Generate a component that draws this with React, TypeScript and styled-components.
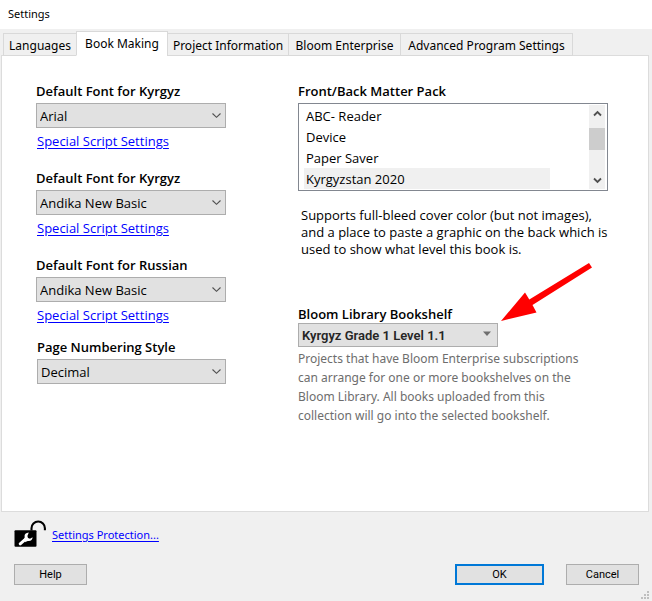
import React, { useState } from "react";
import styled, { createGlobalStyle } from "styled-components";

const GlobalStyle = createGlobalStyle`
  *, *::before, *::after { box-sizing: border-box; }
  body { margin: 0; background: #f0f0f0; color: #000; font: 13px/17px "Open Sans", "Noto Sans", sans-serif; }
  button, select { font: inherit; color: inherit; margin: 0; border-radius: 0; }
  p, h1, ul { margin: 0; padding: 0; font: inherit; }
`;

const Dialog = styled.main`
  display: flex;
  flex-direction: column;
  min-height: 100vh;
`;

const TitleBar = styled.header`
  height: 29px;
  padding-left: 8px;
  background: #fff;
  font: 11px/28px "Noto Sans", sans-serif;
`;

const TabList = styled.div`
  display: flex;
  align-items: flex-end;
  height: 27px;
  padding: 0 3px;
  margin-bottom: -1px;
`;

const Tab = styled.button<{ $active: boolean; $width: number }>`
  position: relative;
  flex: 0 1 ${(p) => p.$width}px;
  height: ${(p) => (p.$active ? 25 : 23)}px;
  margin-right: -1px;
  padding: ${(p) => (p.$active ? 0 : 2)}px 0 0;
  border: 1px solid #d9d9d9;
  border-bottom-color: ${(p) => (p.$active ? "#fff" : "#d9d9d9")};
  background: ${(p) => (p.$active ? "#fff" : "#f0f0f0")};
  font: 12px/19px "Noto Sans", sans-serif;
  white-space: nowrap;
  text-align: center;
`;

const Panel = styled.section`
  flex: 1;
  display: grid;
  grid-template-columns: 19fr 31fr;
  align-items: start;
  gap: 72px;
  margin: 0 3px 0 1px;
  padding: 26px 40px 84px 34px;
  border: 1px solid #dcdcdc;
  background: #fff;
`;

const Column = styled.div`
  display: flex;
  flex-direction: column;
`;

const FontGroup = styled.div`
  display: flex;
  flex-direction: column;
  align-items: stretch;
  height: 87px;
`;

const NumberingGroup = styled.div`
  display: flex;
  flex-direction: column;
  padding: 0 0 0 1px;
  margin-top: -5px;
`;

const Label = styled.label`
  height: 21px;
  line-height: 19px;
  font-weight: 600;
`;

const SelectFrame = styled.div<{ $compact?: boolean }>`
  display: grid;
  align-items: center;
  height: ${(p) => (p.$compact ? 24 : 25)}px;
  width: ${(p) => (p.$compact ? "200px" : "auto")};
  font: ${(p) => (p.$compact ? '600 13px/17px Roboto, sans-serif' : "inherit")};
  color: ${(p) => (p.$compact ? "#262626" : "#000")};

  & > * { grid-area: 1 / 1; }
  & > select { padding-top: ${(p) => (p.$compact ? 0 : 2)}px; }
  & > svg {
    justify-self: end;
    margin-right: ${(p) => (p.$compact ? 6 : 4)}px;
    pointer-events: none;
  }
`;

const Select = styled.select`
  appearance: none;
  width: 100%;
  height: 100%;
  padding: 0 20px 0 3px;
  border: 1px solid #adadad;
  background: #e1e1e1;
`;

const Link = styled.a<{ $small?: boolean }>`
  color: #0000ff;
  text-decoration: underline;
  text-underline-offset: 2px;
  font: ${(p) => (p.$small ? '11px/17px "Noto Sans", sans-serif' : "inherit")};
`;

const LinkLine = styled.p`
  padding: 5px 0 0 1px;
`;

const ListFrame = styled.div`
  display: flex;
  height: 88px;
  padding: 1px 2px 1px 5px;
  border: 1px solid #828790;
`;

const Options = styled.div`
  flex: 1;
  display: flex;
  flex-direction: column;
  padding-right: 39px;
  padding-top: 0;
`;

const Option = styled.button<{ $selected: boolean }>`
  flex: 0 0 21px;
  padding: 1px 2px 0;
  border: 0;
  text-align: left;
  background: ${(p) => (p.$selected ? "#f0f0f0" : "#fff")};
`;

const ScrollTrack = styled.div`
  display: flex;
  flex-direction: column;
  width: 16px;
  background: #f0f0f0;
`;

const ScrollButton = styled.button`
  display: grid;
  place-items: center;
  height: 17px;
  padding: 0;
  border: 0;
  background: transparent;

  &:last-child { margin-top: auto; }
`;

const ScrollThumb = styled.div`
  height: 22px;
  margin-top: 6px;
  background: #cdcdcd;
`;

const PackDescription = styled.p`
  padding: 16px 0 0 3px;
  margin-right: -4px;
`;

const Bookshelf = styled.div`
  position: relative;
  display: flex;
  flex-direction: column;
  margin-top: 48px;
`;

const BookshelfLabel = styled(Label)`
  height: 17px;
  line-height: 17px;
`;

const Arrow = styled.svg`
  position: absolute;
  left: 203px;
  top: -43px;
  pointer-events: none;
`;

const Hint = styled.p`
  max-width: 300px;
  padding-top: 2px;
  color: #6d6d6d;
  font: 12px/19px "Noto Sans", sans-serif;
`;

const Footer = styled.footer`
  display: flex;
  flex-direction: column;
  gap: 16px;
  padding: 8px 0 1px 14px;
`;

const Protection = styled.div`
  display: flex;
  align-items: center;
  gap: 6px;
  height: 28px;
`;

const Buttons = styled.div`
  display: flex;
  height: 36px;
  align-items: flex-start;
`;

const Button = styled.button<{ $primary?: boolean }>`
  width: ${(p) => (p.$primary ? 89 : 73)}px;
  height: 21px;
  margin-left: ${(p) => (p.$primary ? "auto" : "0")};
  margin-right: ${(p) => (p.$primary ? 22 : 0)}px;
  padding: 0;
  border: ${(p) => (p.$primary ? "2px solid #0078d7" : "1px solid #adadad")};
  background: #e1e1e1;
  font: 11px/17px Roboto, sans-serif;
`;

const Grip = styled.svg`
  align-self: flex-end;
  margin: 0 2px 0 2px;
`;

const Chevron = () => (
  <svg width="11" height="7" viewBox="0 0 11 7" fill="none" stroke="#505050" strokeWidth="1.1" aria-hidden="true">
    <path d="M1.5 1.5 5.5 5.3 9.5 1.5" />
  </svg>
);

const Caret = () => (
  <svg width="10" height="8" viewBox="0 0 10 8" fill="#6e6e6e" aria-hidden="true">
    <path d="M1 0.5h8L5 5z" />
  </svg>
);

const ScrollArrow = ({ down }: { down?: boolean }) => (
  <svg width="9" height="7" viewBox="0 0 9 7" fill="none" stroke="#505050" strokeWidth="1.8" aria-hidden="true">
    <path d={down ? "M1 1.5 4.5 5 8 1.5" : "M1 5.5 4.5 2 8 5.5"} />
  </svg>
);

const OpenLock = () => (
  <svg width="32" height="28" viewBox="0 0 32 28" aria-hidden="true">
    <path d="M17.5 10.5V8.2a6.7 6.7 0 0 1 13.4 0v2" fill="none" stroke="#000" strokeWidth="2.1" />
    <rect x="0.5" y="10.3" width="22" height="16.4" rx="1" fill="#000" />
    <path d="M6.2 23.8 11.6 19.2" stroke="#fff" strokeWidth="3" strokeLinecap="round" />
    <path
      d="M14.8 12.6c-2.9.1-4.6 1.9-4.2 4.2.2 1.5-.3 2.2-1.2 3l2.4 2.4c.8-.8 1.6-1.1 3-1.1 2.3-.1 3.7-1.5 3.8-3.8l-2.6 1.5-2-.7-.6-2.1z"
      fill="#fff"
    />
  </svg>
);

const TABS = [
  { name: "Languages", width: 74 },
  { name: "Book Making", width: 92 },
  { name: "Project Information", width: 122 },
  { name: "Bloom Enterprise", width: 113 },
  { name: "Advanced Program Settings", width: 173 },
];

const FONT_SETTINGS = [
  { id: "font1", label: "Default Font for Kyrgyz", value: "Arial" },
  { id: "font2", label: "Default Font for Kyrgyz", value: "Andika New Basic" },
  { id: "font3", label: "Default Font for Russian", value: "Andika New Basic" },
];

const PACKS = ["ABC- Reader", "Device", "Paper Saver", "Kyrgyzstan 2020"];

export default function App() {
  const [tab, setTab] = useState("Book Making");
  const [pack, setPack] = useState("Kyrgyzstan 2020");

  return (
    <Dialog>
      <GlobalStyle />
      <TitleBar>
        <h1>Settings</h1>
      </TitleBar>
      <TabList role="tablist">
        {TABS.map(({ name, width }) => (
          <Tab key={name} role="tab" aria-selected={tab === name} $active={tab === name} $width={width} onClick={() => setTab(name)}>
            {name}
          </Tab>
        ))}
      </TabList>
      <Panel role="tabpanel" aria-label={tab}>
        <Column>
          {FONT_SETTINGS.map(({ id, label, value }) => (
            <FontGroup key={id}>
              <Label htmlFor={id}>{label}</Label>
              <SelectFrame>
                <Select id={id}>
                  <option>{value}</option>
                </Select>
                <Chevron />
              </SelectFrame>
              <LinkLine>
                <Link href="#script">Special Script Settings</Link>
              </LinkLine>
            </FontGroup>
          ))}
          <NumberingGroup>
            <Label htmlFor="numbering">Page Numbering Style</Label>
            <SelectFrame>
              <Select id="numbering">
                <option>Decimal</option>
              </Select>
              <Chevron />
            </SelectFrame>
          </NumberingGroup>
        </Column>
        <Column>
          <Label as="div" id="pack-label">Front/Back Matter Pack</Label>
          <ListFrame>
            <Options role="listbox" aria-labelledby="pack-label">
              {PACKS.map((name) => (
                <Option key={name} role="option" aria-selected={pack === name} $selected={pack === name} onClick={() => setPack(name)}>
                  {name}
                </Option>
              ))}
            </Options>
            <ScrollTrack>
              <ScrollButton aria-label="Scroll up">
                <ScrollArrow />
              </ScrollButton>
              <ScrollThumb />
              <ScrollButton aria-label="Scroll down">
                <ScrollArrow down />
              </ScrollButton>
            </ScrollTrack>
          </ListFrame>
          <PackDescription>
            Supports full-bleed cover color (but not images), and a place to paste a graphic on the back which is used to show what level this book is.
          </PackDescription>
          <Bookshelf>
            <BookshelfLabel htmlFor="bookshelf">Bloom Library Bookshelf</BookshelfLabel>
            <SelectFrame $compact>
              <Select id="bookshelf">
                <option>Kyrgyz Grade 1 Level 1.1</option>
              </Select>
              <Caret />
            </SelectFrame>
            <Hint>
              Projects that have Bloom Enterprise subscriptions can arrange for one or more bookshelves on the Bloom Library. All books uploaded from this collection will go into the selected bookshelf.
            </Hint>
            <Arrow width="91" height="60" viewBox="0 0 91 60" fill="#f00" aria-hidden="true">
              <path d="M0 58 24 29.5 28.3 36.5 88 0 91 4.5 31.5 42 35.5 49.5z" />
            </Arrow>
          </Bookshelf>
        </Column>
      </Panel>
      <Footer>
        <Protection>
          <OpenLock />
          <Link $small href="#protection">Settings Protection...</Link>
        </Protection>
        <Buttons>
          <Button>Help</Button>
          <Button $primary>OK</Button>
          <Button>Cancel</Button>
          <Grip width="9" height="9" viewBox="0 0 9 9" fill="#bfbfbf" aria-hidden="true">
            <path d="M6 0h2v2H6zM3 3h2v2H3zM6 3h2v2H6zM0 6h2v2H0zM3 6h2v2H3zM6 6h2v2H6z" />
          </Grip>
        </Buttons>
      </Footer>
    </Dialog>
  );
}
